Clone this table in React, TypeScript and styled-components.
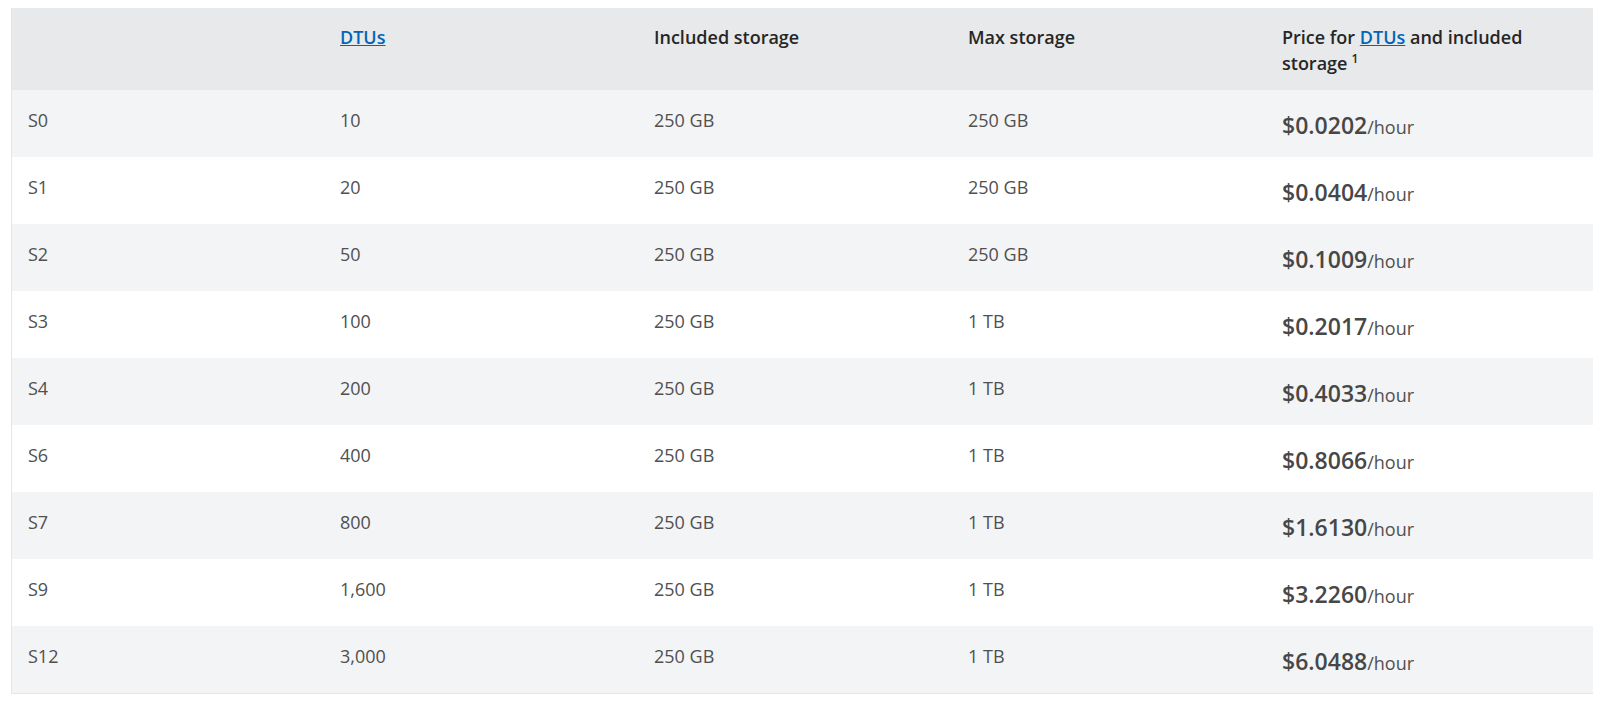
import styled, { createGlobalStyle } from "styled-components";

const GlobalStyle = createGlobalStyle`
  body {
    margin: 0;
    background: #ffffff;
    font-family: "Open Sans", "Noto Sans", sans-serif;
  }
`;

const COLS = "312px 314px 314px 314px 1fr";

const StyledPage = styled.div`
  padding: 8px 7px 0 11px;
`;

const StyledTable = styled.div`
  border-left: 1px solid #e6e6e6;
  border-bottom: 1px solid #e6e6e6;
`;

const StyledHeaderRow = styled.div`
  display: grid;
  grid-template-columns: ${COLS};
  height: 82px;
  background: #e8e9eb;
`;

const StyledRow = styled.div<{ $shaded: boolean }>`
  display: grid;
  grid-template-columns: ${COLS};
  height: 67px;
  background: ${(p) => (p.$shaded ? "#f3f4f6" : "#ffffff")};
`;

const StyledHeaderCell = styled.div`
  padding: 16px 16px 0;
  font-size: 18px;
  line-height: 26px;
  font-weight: 600;
  color: #262626;
`;

const StyledCell = styled.div<{ $price?: boolean }>`
  padding: ${(p) => (p.$price ? "20px" : "18px")} 16px 0;
  font-size: 18px;
  line-height: ${(p) => (p.$price ? "30px" : "24px")};
  color: #505050;
`;

const StyledLink = styled.a`
  color: #0067b8;
  text-decoration: underline;
`;

const StyledSup = styled.sup`
  font-size: 12px;
  line-height: 0;
  margin-left: 4px;
`;

const StyledPrice = styled.span`
  font-size: 23px;
  font-weight: 600;
  color: #474747;
`;

const StyledUnit = styled.span`
  font-size: 18px;
`;

const rows = [
  ["S0", "10", "250 GB", "250 GB", "$0.0202"],
  ["S1", "20", "250 GB", "250 GB", "$0.0404"],
  ["S2", "50", "250 GB", "250 GB", "$0.1009"],
  ["S3", "100", "250 GB", "1 TB", "$0.2017"],
  ["S4", "200", "250 GB", "1 TB", "$0.4033"],
  ["S6", "400", "250 GB", "1 TB", "$0.8066"],
  ["S7", "800", "250 GB", "1 TB", "$1.6130"],
  ["S9", "1,600", "250 GB", "1 TB", "$3.2260"],
  ["S12", "3,000", "250 GB", "1 TB", "$6.0488"],
];

const App = () => {
  return (
    <StyledPage>
      <GlobalStyle />
      <StyledTable>
        <StyledHeaderRow>
          <StyledHeaderCell />
          <StyledHeaderCell>
            <StyledLink href="#">DTUs</StyledLink>
          </StyledHeaderCell>
          <StyledHeaderCell>Included storage</StyledHeaderCell>
          <StyledHeaderCell>Max storage</StyledHeaderCell>
          <StyledHeaderCell>
            Price for <StyledLink href="#">DTUs</StyledLink> and included storage
            <StyledSup>1</StyledSup>
          </StyledHeaderCell>
        </StyledHeaderRow>
        {rows.map(([tier, dtu, incl, max, price], i) => (
          <StyledRow key={tier} $shaded={i % 2 === 0}>
            <StyledCell>{tier}</StyledCell>
            <StyledCell>{dtu}</StyledCell>
            <StyledCell>{incl}</StyledCell>
            <StyledCell>{max}</StyledCell>
            <StyledCell $price>
              <StyledPrice>{price}</StyledPrice>
              <StyledUnit>/hour</StyledUnit>
            </StyledCell>
          </StyledRow>
        ))}
      </StyledTable>
    </StyledPage>
  );
};

export default App;
